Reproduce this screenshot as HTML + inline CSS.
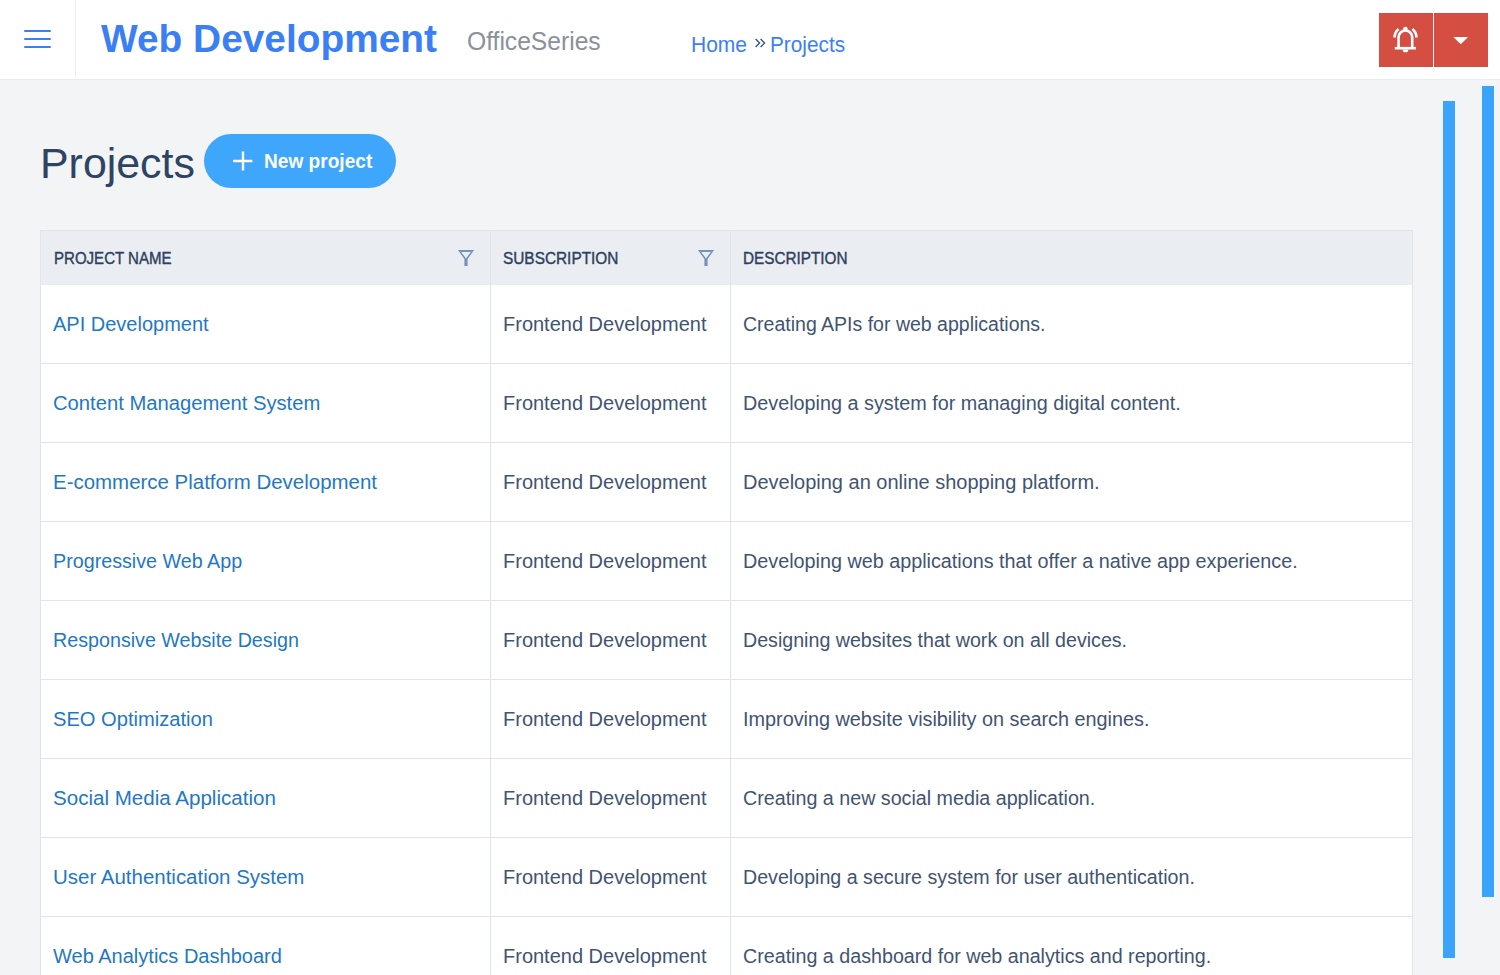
<!DOCTYPE html>
<html><head><meta charset="utf-8"><style>
*{margin:0;padding:0;box-sizing:border-box}
html,body{width:1500px;height:975px;overflow:hidden;background:#f3f4f6;font-family:"Liberation Sans",sans-serif}
.t{position:absolute;white-space:nowrap}
.abs{position:absolute}
#hdr{position:absolute;left:0;top:0;width:1500px;height:80px;background:#fff;border-bottom:1px solid #e8ebef}
.hb{position:absolute;left:24px;width:27px;height:2px;background:#3b7ff5;border-radius:1px}
.blue{color:#3b7ff5}
.gray{color:#89919a}
.dark{color:#2d4463}
.link{color:#1f78c5}
.body{color:#3f5472}
.th{color:#2e405b;font-weight:normal;-webkit-text-stroke:0.4px #2e405b}
.bar{position:absolute;background:#3aa4fb}
.hl{position:absolute;left:40px;width:1373px;height:1px;background:#dde4ec}
.vl{position:absolute;width:1px;background:#dde4ec}
</style></head><body>
<div id="hdr"></div>
<div class="hb" style="top:30px"></div>
<div class="hb" style="top:38px"></div>
<div class="hb" style="top:46px"></div>
<div class="abs" style="left:75px;top:0;width:1px;height:76px;background:#eceef1"></div>
<div class="t blue" style="left:101px;top:18.79px;font-size:39px;line-height:39px;transform:scaleX(0.996);transform-origin:0 0;font-weight:bold;">Web Development</div>
<div class="t gray" style="left:467px;top:28.39px;font-size:26px;line-height:26px;transform:scaleX(0.947);transform-origin:0 0;">OfficeSeries</div>
<div class="t blue" style="left:691px;top:33.78px;font-size:22px;line-height:22px;transform:scaleX(0.955);transform-origin:0 0;">Home</div>
<svg class="abs" style="left:754px;top:37px" width="13" height="12" viewBox="0 0 13 12"><path d="M1.6 2 L5.6 6 L1.6 10 M6.6 2 L10.6 6 L6.6 10" fill="none" stroke="#2b4a85" stroke-width="1.25"/></svg>
<div class="t blue" style="left:770px;top:33.78px;font-size:22px;line-height:22px;transform:scaleX(0.945);transform-origin:0 0;">Projects</div>
<div class="abs" style="left:1379px;top:13px;width:54px;height:54px;background:#d54e42"></div>
<div class="abs" style="left:1434px;top:13px;width:54px;height:54px;background:#d54e42"></div>
<svg class="abs" style="left:1379px;top:13px" width="54" height="54" viewBox="0 0 54 54">
<g fill="none" stroke="#fff" stroke-width="2.6" stroke-linecap="butt">
<path d="M19.6 34 V24.3 A6.8 6.8 0 0 1 33.2 24.3 V34"/>
<path d="M15.8 35.2 H37"/>
<path d="M15.6 24.4 A11 11 0 0 1 19.6 16"/>
<path d="M37.4 24.4 A11 11 0 0 0 33.4 16"/>
</g>
<circle cx="26.4" cy="16" r="2.3" fill="#fff"/>
<path d="M23.6 36.4 H29.4 A2.9 2.9 0 0 1 23.6 36.4Z" fill="#fff"/>
</svg>
<svg class="abs" style="left:1434px;top:13px" width="54" height="54" viewBox="0 0 54 54"><path d="M19.4 23.9 H34.1 L26.75 31.2Z" fill="#fff"/></svg>
<div class="bar" style="left:1443px;top:101px;width:12px;height:857px"></div>
<div class="bar" style="left:1482px;top:86px;width:12px;height:811px"></div>
<div class="t dark" style="left:40px;top:143.05px;font-size:42px;line-height:42px;transform:scaleX(1.021);transform-origin:0 0;">Projects</div>
<div class="abs" style="left:204px;top:134px;width:192px;height:54px;border-radius:27px;background:#3ea6fb"></div>
<svg class="abs" style="left:232px;top:150px" width="22" height="22" viewBox="0 0 22 22"><path d="M11 1.6 V20.5 M1.2 11 H20.4" stroke="#fff" stroke-width="2.4" fill="none"/></svg>
<div class="t " style="left:264px;top:151.07px;font-size:20px;line-height:20px;transform:scaleX(0.955);transform-origin:0 0;color:#fff;font-weight:bold;">New project</div>
<div class="abs" style="left:40px;top:230px;width:1373px;height:745px;background:#fff;border:1px solid #dde4ec;border-bottom:none"></div>
<div class="abs" style="left:41px;top:231px;width:1371px;height:54px;background:#eaedf2"></div>
<div class="vl" style="left:490px;top:231px;height:744px"></div>
<div class="vl" style="left:730px;top:231px;height:744px"></div>
<div class="hl" style="top:363px"></div>
<div class="hl" style="top:442px"></div>
<div class="hl" style="top:521px"></div>
<div class="hl" style="top:600px"></div>
<div class="hl" style="top:679px"></div>
<div class="hl" style="top:758px"></div>
<div class="hl" style="top:837px"></div>
<div class="hl" style="top:916px"></div>
<div class="t th" style="left:54px;top:249.61px;font-size:17px;line-height:17px;transform:scaleX(0.885);transform-origin:0 0;">PROJECT NAME</div>
<div class="t th" style="left:503px;top:249.61px;font-size:17px;line-height:17px;transform:scaleX(0.905);transform-origin:0 0;">SUBSCRIPTION</div>
<div class="t th" style="left:743px;top:249.61px;font-size:17px;line-height:17px;transform:scaleX(0.9);transform-origin:0 0;">DESCRIPTION</div>
<svg class="abs" style="left:457px;top:249px" width="18" height="18" viewBox="0 0 18 18"><path d="M0.9 1.1 H17.1 L10.6 10 V16.9 H7.4 V10 Z M4.1 2.9 L9 9.4 L13.9 2.9Z" fill="#7593bb" fill-rule="evenodd"/></svg>
<svg class="abs" style="left:697px;top:249px" width="18" height="18" viewBox="0 0 18 18"><path d="M0.9 1.1 H17.1 L10.6 10 V16.9 H7.4 V10 Z M4.1 2.9 L9 9.4 L13.9 2.9Z" fill="#7593bb" fill-rule="evenodd"/></svg>
<div class="t link" style="left:53px;top:314.07px;font-size:20px;line-height:20px;">API Development</div>
<div class="t body" style="left:503px;top:314.07px;font-size:20px;line-height:20px;">Frontend Development</div>
<div class="t body" style="left:743px;top:314.07px;font-size:20px;line-height:20px;transform:scaleX(0.9754);transform-origin:0 0;">Creating APIs for web applications.</div>
<div class="t link" style="left:53px;top:393.07px;font-size:20px;line-height:20px;transform:scaleX(1.0103);transform-origin:0 0;">Content Management System</div>
<div class="t body" style="left:503px;top:393.07px;font-size:20px;line-height:20px;">Frontend Development</div>
<div class="t body" style="left:743px;top:393.07px;font-size:20px;line-height:20px;transform:scaleX(0.9893);transform-origin:0 0;">Developing a system for managing digital content.</div>
<div class="t link" style="left:53px;top:472.07px;font-size:20px;line-height:20px;transform:scaleX(1.0228);transform-origin:0 0;">E-commerce Platform Development</div>
<div class="t body" style="left:503px;top:472.07px;font-size:20px;line-height:20px;">Frontend Development</div>
<div class="t body" style="left:743px;top:472.07px;font-size:20px;line-height:20px;transform:scaleX(0.9992);transform-origin:0 0;">Developing an online shopping platform.</div>
<div class="t link" style="left:53px;top:551.07px;font-size:20px;line-height:20px;transform:scaleX(0.9853);transform-origin:0 0;">Progressive Web App</div>
<div class="t body" style="left:503px;top:551.07px;font-size:20px;line-height:20px;">Frontend Development</div>
<div class="t body" style="left:743px;top:551.07px;font-size:20px;line-height:20px;transform:scaleX(0.9886);transform-origin:0 0;">Developing web applications that offer a native app experience.</div>
<div class="t link" style="left:53px;top:630.07px;font-size:20px;line-height:20px;transform:scaleX(0.9847);transform-origin:0 0;">Responsive Website Design</div>
<div class="t body" style="left:503px;top:630.07px;font-size:20px;line-height:20px;">Frontend Development</div>
<div class="t body" style="left:743px;top:630.07px;font-size:20px;line-height:20px;transform:scaleX(0.9815);transform-origin:0 0;">Designing websites that work on all devices.</div>
<div class="t link" style="left:53px;top:709.07px;font-size:20px;line-height:20px;transform:scaleX(1.0064);transform-origin:0 0;">SEO Optimization</div>
<div class="t body" style="left:503px;top:709.07px;font-size:20px;line-height:20px;">Frontend Development</div>
<div class="t body" style="left:743px;top:709.07px;font-size:20px;line-height:20px;transform:scaleX(0.9909);transform-origin:0 0;">Improving website visibility on search engines.</div>
<div class="t link" style="left:53px;top:788.07px;font-size:20px;line-height:20px;transform:scaleX(1.0279);transform-origin:0 0;">Social Media Application</div>
<div class="t body" style="left:503px;top:788.07px;font-size:20px;line-height:20px;">Frontend Development</div>
<div class="t body" style="left:743px;top:788.07px;font-size:20px;line-height:20px;transform:scaleX(0.984);transform-origin:0 0;">Creating a new social media application.</div>
<div class="t link" style="left:53px;top:867.07px;font-size:20px;line-height:20px;transform:scaleX(1.0234);transform-origin:0 0;">User Authentication System</div>
<div class="t body" style="left:503px;top:867.07px;font-size:20px;line-height:20px;">Frontend Development</div>
<div class="t body" style="left:743px;top:867.07px;font-size:20px;line-height:20px;transform:scaleX(0.9819);transform-origin:0 0;">Developing a secure system for user authentication.</div>
<div class="t link" style="left:53px;top:946.07px;font-size:20px;line-height:20px;transform:scaleX(1.0009);transform-origin:0 0;">Web Analytics Dashboard</div>
<div class="t body" style="left:503px;top:946.07px;font-size:20px;line-height:20px;">Frontend Development</div>
<div class="t body" style="left:743px;top:946.07px;font-size:20px;line-height:20px;transform:scaleX(0.984);transform-origin:0 0;">Creating a dashboard for web analytics and reporting.</div>
</body></html>
